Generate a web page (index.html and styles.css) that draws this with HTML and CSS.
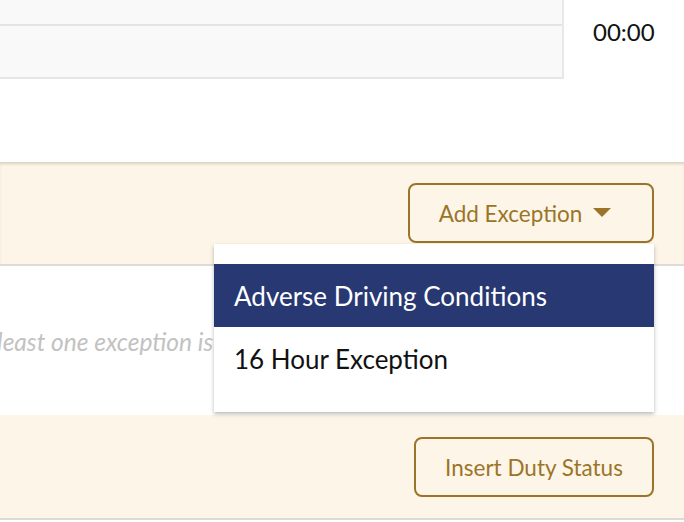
FILE: index.html
```html
<!DOCTYPE html>
<html>
<head>
<meta charset="utf-8">
<link rel="stylesheet" href="styles.css">
</head>
<body>
<div class="page">
  <div class="table-area">
    <div class="grid-rows">
      <div class="row row-top"></div>
      <div class="row row-main"></div>
    </div>
    <div class="time-cell">00:00</div>
  </div>
  <div class="spacer"></div>
  <div class="band band-top">
    <button class="btn btn-exception">Add Exception <span class="caret"></span></button>
  </div>
  <div class="message">
    <p class="hint">At least one exception is required</p>
  </div>
  <div class="band band-bottom">
    <button class="btn btn-insert">Insert Duty Status</button>
  </div>
  <ul class="dropdown">
    <li class="item item-active">Adverse Driving Conditions</li>
    <li class="item">16 Hour Exception</li>
  </ul>
</div>
</body>
</html>
```
FILE: styles.css
```css
* { box-sizing: border-box; }
html, body { margin: 0; padding: 0; background: #fff; }
body {
  font-family: "Lato", "Noto Sans", sans-serif;
  color: #111;
  width: 684px;
  height: 522px;
  overflow: hidden;
}
.page { position: relative; width: 684px; height: 522px; overflow: hidden; }

.table-area { display: flex; height: 79px; }
.grid-rows {
  flex: 1;
  display: flex;
  flex-direction: column;
  background: #f9f9f9;
  border-right: 2px solid #e8e8e8;
  border-bottom: 2px solid #e6e6e6;
}
.row-top { height: 26px; border-bottom: 2px solid #e4e4e4; }
.row-main { flex: 1; }
.time-cell {
  width: 120px;
  padding: 17px 0 0 29px;
  font-size: 24px;
  line-height: 30px;
  background: #fff;
}

.spacer { height: 83px; }

.band {
  background: #fdf6e8;
  border-bottom: 2px solid #dedbd6;
  display: flex;
  justify-content: flex-end;
  padding-right: 30px;
}
.band-top {
  height: 104px;
  padding-top: 21px;
  box-shadow: inset 0 3px 3px -1px rgba(120, 100, 70, 0.25);
}
.band-bottom { height: 105px; padding-top: 22px; }

.btn {
  font-family: inherit;
  background: transparent;
  border: 2px solid #9b7429;
  border-radius: 8px;
  color: #9b7429;
  font-size: 22.5px;
  height: 60px;
  padding: 0;
  display: flex;
  align-items: center;
  justify-content: center;
}
.btn-exception { width: 246px; gap: 11px; padding-right: 12px; }
.btn-insert { width: 240px; }
.caret {
  width: 0; height: 0;
  border-left: 9px solid transparent;
  border-right: 9px solid transparent;
  border-top: 9px solid #9b7429;
  margin-top: -2px;
}

.message { height: 149px; display: flex; align-items: center; }
.hint {
  margin: 2px 0 0 -32px;
  font-style: italic;
  color: #c2c2c2;
  font-size: 24.5px;
  white-space: nowrap;
}

.dropdown {
  position: absolute;
  left: 214px;
  top: 244px;
  width: 440px;
  margin: 0;
  padding: 20px 0 22px;
  list-style: none;
  background: #fff;
  box-shadow: 0 2px 4px rgba(0, 0, 0, 0.28);
}
.item {
  height: 63px;
  display: flex;
  align-items: center;
  padding-left: 20px;
  font-size: 26px;
  color: #111;
}
.item-active { background: #273872; color: #fff; }
```
